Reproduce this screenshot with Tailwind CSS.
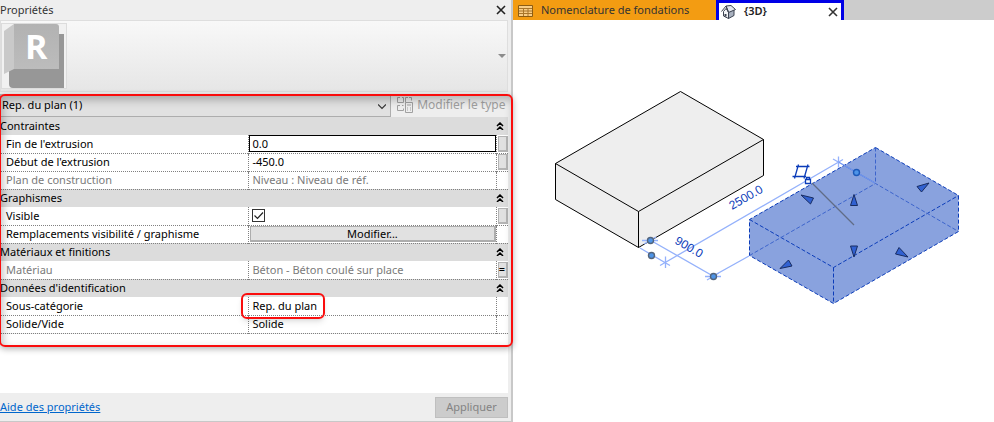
<!DOCTYPE html>
<html lang="fr">
  <head>
    <meta charset="utf-8" />
    <title>Propriétés</title>
    <meta name="viewport" content="width=device-width, initial-scale=1" />
    <script src="https://cdn.jsdelivr.net/npm/@tailwindcss/browser@4"></script>
  </head>

  <body class="bg-white font-['Noto_Sans','Open_Sans',sans-serif] text-[11px] text-black">
    <div class="grid min-h-screen grid-cols-[513fr_481fr]">
      <!-- properties palette -->
      <aside class="flex flex-col border-r-2 border-b border-[#c8c8c8] bg-[#eeeeee] pr-[3px]">
        <header class="flex h-5 items-center justify-between text-[#333]">
          <h1>Propriétés</h1>
          <button type="button" aria-label="Fermer" class="mr-px">
            <svg class="h-3 w-3" viewBox="0 0 12 12" stroke="#222" stroke-width="1.600">
              <path d="M2 2l8 8M10 2l-8 8" />
            </svg>
          </button>
        </header>

        <div class="flex h-18 items-center justify-between border border-[#dedede] bg-linear-to-b from-[#f8f8f8] to-[#e6e6e6]">
          <svg class="h-[66px] w-[67px]" viewBox="0 0 67 66">
            <defs>
              <linearGradient id="face" x1="0" y1="0" x2="0" y2="1">
                <stop offset="0" stop-color="#b2b2b2" />
                <stop offset="1" stop-color="#bcbcbc" />
              </linearGradient>
            </defs>
            <rect x=".5" y=".5" width="65" height="65" fill="#f1f1f1" stroke="#dcdcdc" />
            <path d="M8 46h46V11h9v54H12q-4 0-4-4z" fill="#979797" />
            <path d="M3 8l10-7v45L3 51z" fill="#c9c9c9" />
            <path d="M13 1h42q3 0 3 3v42H13z" fill="url(#face)" />
            <text x="24" y="36" fill="#fff" font-family="Open Sans" font-weight="700" font-size="34">R</text>
          </svg>
          <button type="button" aria-label="Choisir un type" class="pr-px">
            <svg class="h-1 w-2" viewBox="0 0 8 4"><path d="M0 0h8L4 4z" fill="#8c8c8c" /></svg>
          </button>
        </div>

        <div class="relative -mr-[3px] pr-[3px]">
          <div class="flex h-[25px] items-center pt-px">
            <div class="relative h-[23px] w-[77%] border border-[#adadad] bg-[#e1e1e1]">
              <select aria-label="Filtre" class="h-full w-full appearance-none pl-px">
                <option>Rep. du plan (1)</option>
              </select>
              <svg class="pointer-events-none absolute top-2 right-1 h-2 w-2" viewBox="0 0 8 8" fill="none" stroke="#333" stroke-width="1.200">
                <path d="M0 1.500l4 4 4-4" />
              </svg>
            </div>
            <button type="button" class="ml-1.5 flex items-center gap-1 text-xs whitespace-nowrap text-[#a0a0a0]">
              <svg class="h-4 w-4" viewBox="0 0 16 16" fill="none" stroke="#a0a0a0">
                <path d="M3 .5H.5v5h6v-5H5M11 .5H8.500v5M12 .5h2.500v3M3 8.500H.5v5h6v-2M5 8.500h1.500" />
                <path d="M8.500 5.500h7v10h-7z" />
                <path d="M10 8h4M10 11h1M13 11h1M10 13h1M13 13h1" />
              </svg>
              Modifier le type
            </button>
          </div>

          <table class="w-full table-fixed border-collapse leading-4">
            <colgroup>
              <col class="w-[49%]" />
              <col />
              <col class="w-3" />
            </colgroup>
            <tbody>
              <tr class="h-[18px] bg-[#dcdcdc]">
                <th colspan="2" class="p-0 text-left font-normal">Contraintes</th>
                <td class="p-0"><svg class="h-2 w-2" viewBox="0 0 8 8" fill="none" stroke="#000" stroke-width="1.500"><path d="M1 4l3-3 3 3M1 8l3-3 3 3" /></svg></td>
              </tr>
              <tr class="h-[18px] border-b border-dotted border-[#808080] bg-white">
                <td class="border-r border-dotted border-[#808080] p-0 pl-1.5"><label for="fin">Fin de l'extrusion</label></td>
                <td class="border-r border-dotted border-[#808080] p-0"><input id="fin" value="0.0" class="block h-[17px] w-full border border-black pl-0.5" /></td>
                <td class="p-0 pl-px"><button type="button" aria-label="Associer" class="block h-4 w-[10px] border border-r-2 border-b-2 border-[#b4b4b4] bg-[#e1e1e1]"></button></td>
              </tr>
              <tr class="h-[18px] border-b border-dotted border-[#808080] bg-white">
                <td class="border-r border-dotted border-[#808080] p-0 pl-1.5"><label for="debut">Début de l'extrusion</label></td>
                <td class="border-r border-dotted border-[#808080] p-0"><input id="debut" value="-450.0" class="block h-4 w-full pl-[3px]" /></td>
                <td class="p-0 pl-px"><button type="button" aria-label="Associer" class="block h-4 w-[10px] border border-r-2 border-b-2 border-[#b4b4b4] bg-[#e1e1e1]"></button></td>
              </tr>
              <tr class="h-[18px] border-b border-dotted border-[#808080] bg-white text-[#7a7a7a]">
                <td class="border-r border-dotted border-[#808080] p-0 pl-1.5">Plan de construction</td>
                <td class="border-r border-dotted border-[#808080] p-0 pl-[3px]">Niveau : Niveau de réf.</td>
                <td class="p-0"></td>
              </tr>
              <tr class="h-[18px] bg-[#dcdcdc]">
                <th colspan="2" class="p-0 text-left font-normal">Graphismes</th>
                <td class="p-0"><svg class="h-2 w-2" viewBox="0 0 8 8" fill="none" stroke="#000" stroke-width="1.500"><path d="M1 4l3-3 3 3M1 8l3-3 3 3" /></svg></td>
              </tr>
              <tr class="h-[18px] border-b border-dotted border-[#808080] bg-white">
                <td class="border-r border-dotted border-[#808080] p-0 pl-1.5"><label for="visible">Visible</label></td>
                <td class="border-r border-dotted border-[#808080] p-0 pl-[3px]">
                  <span class="relative block h-[13px] w-[13px]">
                    <input id="visible" type="checkbox" checked class="block h-[13px] w-[13px] appearance-none border border-[#333] bg-white" />
                    <svg class="pointer-events-none absolute inset-0" viewBox="0 0 13 13" fill="none" stroke="#222" stroke-width="1.200"><path d="M2.500 6.500l3 3 5.500-6" /></svg>
                  </span>
                </td>
                <td class="p-0 pl-px"><button type="button" aria-label="Associer" class="block h-4 w-[10px] border border-r-2 border-b-2 border-[#b4b4b4] bg-[#e1e1e1]"></button></td>
              </tr>
              <tr class="h-[18px] border-b border-dotted border-[#808080] bg-white">
                <td class="border-r border-dotted border-[#808080] p-0 pl-1.5 whitespace-nowrap">Remplacements visibilité / graphisme</td>
                <td class="border-r border-dotted border-[#808080] p-0 pl-px"><button type="button" class="block h-4 w-full border border-r-2 border-b-2 border-[#adadad] bg-[#e1e1e1] leading-3">Modifier...</button></td>
                <td class="p-0"></td>
              </tr>
              <tr class="h-[18px] bg-[#dcdcdc]">
                <th colspan="2" class="p-0 text-left font-normal">Matériaux et finitions</th>
                <td class="p-0"><svg class="h-2 w-2" viewBox="0 0 8 8" fill="none" stroke="#000" stroke-width="1.500"><path d="M1 4l3-3 3 3M1 8l3-3 3 3" /></svg></td>
              </tr>
              <tr class="h-[18px] border-b border-dotted border-[#808080] bg-white text-[#7a7a7a]">
                <td class="border-r border-dotted border-[#808080] p-0 pl-1.5">Matériau</td>
                <td class="border-r border-dotted border-[#808080] p-0 pl-[3px]">Béton - Béton coulé sur place</td>
                <td class="p-0 pl-px"><button type="button" class="block h-4 w-[10px] border border-r-2 border-b-2 border-[#b4b4b4] bg-[#e1e1e1] leading-3 text-black">=</button></td>
              </tr>
              <tr class="h-[18px] bg-[#dcdcdc]">
                <th colspan="2" class="p-0 text-left font-normal">Données d'identification</th>
                <td class="p-0"><svg class="h-2 w-2" viewBox="0 0 8 8" fill="none" stroke="#000" stroke-width="1.500"><path d="M1 4l3-3 3 3M1 8l3-3 3 3" /></svg></td>
              </tr>
              <tr class="h-[18px] border-b border-dotted border-[#808080] bg-white">
                <td class="border-r border-dotted border-[#808080] p-0 pl-1.5">Sous-catégorie</td>
                <td class="relative border-r border-dotted border-[#808080] p-0 pl-[3px]">
                  Rep. du plan
                  <div class="pointer-events-none absolute -top-1 -left-2 h-[26px] w-[84px] rounded-md border-2 border-[#fa0d0d] shadow-md"></div>
                </td>
                <td class="p-0"></td>
              </tr>
              <tr class="h-[18px] border-b border-dotted border-[#808080] bg-white">
                <td class="border-r border-dotted border-[#808080] p-0 pl-1.5">Solide/Vide</td>
                <td class="border-r border-dotted border-[#808080] p-0 pl-[3px]">Solide</td>
                <td class="p-0"></td>
              </tr>
            </tbody>
          </table>
          <div class="h-3.5 bg-white"></div>
          <!-- red callout around the parameters -->
          <div class="pointer-events-none absolute top-[2px] -right-[2px] bottom-px -left-px rounded-md border-2 border-[#fa0d0d] shadow-[0_2px_6px_rgba(0,0,0,0.3),inset_2px_4px_8px_rgba(0,0,0,0.25)]"></div>
        </div>
        <div class="min-h-4 flex-1 bg-white"></div>

        <footer class="flex h-7 items-center justify-between">
          <a href="#" class="text-[#0066cc] underline">Aide des propriétés</a>
          <button type="button" disabled class="h-[21px] w-[73px] border border-[#bfbfbf] bg-[#cccccc] text-[#838383]">Appliquer</button>
        </footer>
      </aside>

      <!-- views -->
      <main class="flex min-w-0 flex-col">
        <nav class="flex h-5 bg-[#cccccc]">
          <button type="button" class="flex w-[203px] items-center gap-2 bg-[#f39c12] pt-px pl-[5px] whitespace-nowrap text-[#333]">
            <svg class="h-3 w-[15px]" viewBox="0 0 15 12">
              <path d="M.5.5h14v11H.5z" fill="#f8cd85" stroke="#8d5d12" />
              <path d="M1 3.500h13M1 6h13M1 8.500h13M5.500 3v8M10 3v8" stroke="#a8752a" fill="none" />
            </svg>
            Nomenclature de fondations
          </button>
          <div class="flex w-[128px] items-center border-3 border-b-0 border-[#0000e6] bg-white pr-0.5 pl-0.5 font-semibold text-[#222]">
            <svg class="h-[14px] w-[15px]" viewBox="0 0 15 14" stroke="#3c4350" stroke-linejoin="round">
              <path d="M2.500 6.500V11l5 2.500V7L5 3.500z" fill="#f4f5f8" />
              <path d="M7.500 7l5.500-2.500v6l-5.500 3z" fill="#a9b1bf" />
              <path d="M5 1l5-.5 4.500 4-7 3z" fill="#e3e7ef" />
              <path d="M.5 6.500L5 1l2.500 6" fill="none" />
              <path d="M4.500 9v2.500" stroke-width="2" />
            </svg>
            <button type="button" class="ml-2 flex-1 text-left">{3D}</button>
            <button type="button" aria-label="Fermer la vue">
              <svg class="h-3 w-3" viewBox="0 0 12 12" stroke="#333" stroke-width="1.600"><path d="M2 2l8 8M10 2l-8 8" /></svg>
            </button>
          </div>
        </nav>

        <svg class="w-full" viewBox="513 20 481 402" font-family="Liberation Sans, Arial, sans-serif" font-size="12">
          <!-- solid box -->
          <g fill="#eeeeee" stroke="#000" stroke-linejoin="round">
            <path d="M680.500 91.500L763.500 139.500V175.500L638.500 247.500L555.500 199.500V163.500z" />
            <path d="M555.500 163.500L638.500 211.500L763.500 139.500M638.500 211.500V247.500" fill="none" />
          </g>

          <!-- dimensions -->
          <g stroke="#94b1fb" stroke-width="1.300" fill="none">
            <path d="M660 265.500L843 159.500M665.500 256.500V268M838.500 156.500V167.500M640 248L670 265.500M833 159L875 183" />
            <path d="M650 240L713 276L749 256M642 240.500H658M705 276.500H721M644 244L656 237M707 280L719 273" />
          </g>

          <!-- selected box -->
          <path d="M875.500 147.500L958.500 195.500V231.500L833.500 303.500L749.500 255.500V219.500z" fill="#1446be" fill-opacity=".5" />
          <g fill="none" stroke="#0b3cb9" stroke-dasharray="4 2">
            <path d="M875.500 147.500L958.500 195.500V231.500L833.500 303.500L749.500 255.500V219.500z" />
            <path d="M749.500 219.500L833.500 267.500L958.500 195.500M833.500 267.500V303.500" />
            <path d="M749.500 255.500L875.500 183.500L958.500 231.500M875.500 147.500V183.500" stroke="#3c64cc" />
          </g>
          <path d="M838.500 162L875 183" stroke="#7398f0" fill="none" />
          <path d="M812 183L854 225" stroke="#606c86" stroke-width="1.300" />

          <!-- shape handles -->
          <g fill="#3161d1" stroke="#182c62">
            <path d="M801 195L813.500 198L810.500 204z" />
            <path d="M854 194.500L850.500 205.500H857.500z" />
            <path d="M929 183L917 186.500L921.500 192z" />
            <path d="M850.500 246H857.500L854 257z" />
            <path d="M780 268.500L788.500 260L792 266z" />
            <path d="M908 257L899 247.500L895.500 254z" />
          </g>
          <g fill="#4d94e8" stroke="#53647c" stroke-width="1.400">
            <circle cx="650.500" cy="240.500" r="3" />
            <circle cx="651.500" cy="255.500" r="3" />
            <circle cx="713.500" cy="276.500" r="3" />
            <circle cx="856.500" cy="172.500" r="3" stroke="#1c59b9" />
          </g>

          <!-- work plane icon -->
          <g fill="none" stroke="#0b3cb9" stroke-width="1.300">
            <path d="M796 166.500H809.500M792.500 176.500H806M798.500 164.500L794.500 178.500M808 164.500L804 178.500" />
            <path d="M805.500 179.500H810.500V183.500H805.500zM806.500 179V177.500H809.500V179" fill="#fff" />
          </g>

          <g fill="#0b3cb9">
            <text transform="translate(732 210) rotate(-30)">2500.0</text>
            <text transform="translate(674 243) rotate(30)">900.0</text>
          </g>
        </svg>
      </main>
    </div>
  </body>
</html>
